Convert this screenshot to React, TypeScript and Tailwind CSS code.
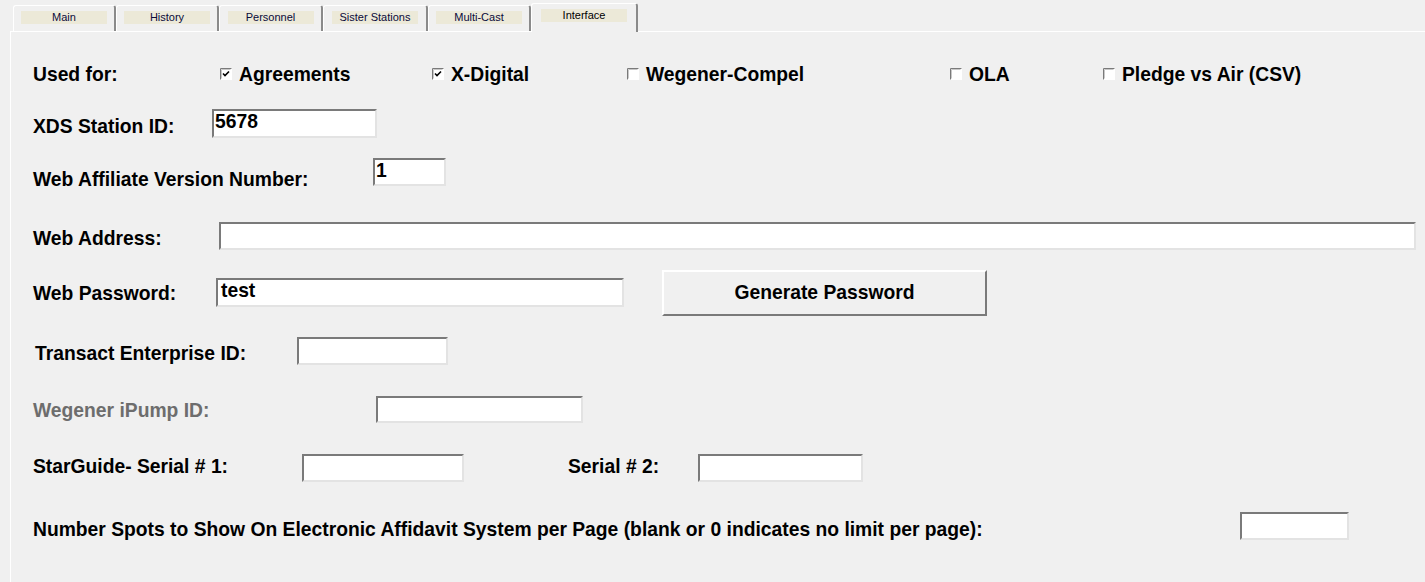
import React from "react";

const tabs = [
  { label: "Main", w: "w-[103px]" },
  { label: "History", w: "w-[103px]" },
  { label: "Personnel", w: "w-[104px]" },
  { label: "Sister Stations", w: "w-[105px]" },
  { label: "Multi-Cast", w: "w-[103px]" },
];

function Tab({ label, w }: { label: string; w: string }) {
  return (
    <div
      className={`${w} h-[27px] mt-[5px] border-t border-l border-t-white border-l-white border-r-2 border-r-[#8a8a8a] rounded-t-[3px] flex justify-center pt-[5px]`}
    >
      <div className="w-[86px] h-[13px] bg-[#ece9d8] flex items-center justify-center text-[11px] text-[#0a0a3a] leading-none">
        {label}
      </div>
    </div>
  );
}

function Check({ checked }: { checked?: boolean }) {
  return (
    <svg width="12" height="12" viewBox="0 0 12 12" className="shrink-0">
      <rect x="0" y="0" width="12" height="12" fill="#ffffff" />
      <path d="M0.5 11.5 V0.5 H11.5" fill="none" stroke="#7a7a7a" />
      <path d="M1.5 10.5 V1.5 H10.5" fill="none" stroke="#c8c8c8" />
      {checked && <path d="M3 5.5 L5 7.5 L9 3.5" fill="none" stroke="#000" strokeWidth="1.6" />}
    </svg>
  );
}

function Field({ className, value }: { className: string; value?: string }) {
  return (
    <div
      className={`${className} bg-white border-2 border-t-[#7a7a7a] border-l-[#7a7a7a] border-b-[#e3e3e3] border-r-[#e3e3e3] pl-[1px] text-[19.3px] font-bold leading-[22px] text-black`}
    >
      {value}
    </div>
  );
}

const label = "text-[19.3px] font-bold leading-none whitespace-nowrap pt-[2px]";

export default function App() {
  return (
    <div className="w-[1425px] h-[582px] bg-[#f0f0f0] overflow-hidden flex flex-col text-black font-['Liberation_Sans',Arial,sans-serif]">
      <div className="flex h-[31px] pl-[13px] shrink-0">
        {tabs.map((t) => (
          <Tab key={t.label} {...t} />
        ))}
        <div className="w-[107px] h-[29px] mt-[3px] border-t border-l border-t-white border-l-white border-r-2 border-r-[#8a8a8a] rounded-t-[3px] flex justify-center pt-[5px] relative z-10 bg-[#f0f0f0] -mb-[1px]">
          <div className="w-[86px] h-[13px] bg-[#ece9d8] flex items-center justify-center text-[11px] text-black leading-none">
            Interface
          </div>
        </div>
      </div>

      <div className="ml-[10px] flex-1 border-t border-l border-white pl-[22px] pt-[28px] flex flex-col">
        <div className="flex items-center h-[28px]">
          <div className={`${label} w-[187px]`}>Used for:</div>
          <div className="flex items-center gap-[7px] w-[212px]">
            <Check checked />
            <span className={label}>Agreements</span>
          </div>
          <div className="flex items-center gap-[7px] w-[195px]">
            <Check checked />
            <span className={label}>X-Digital</span>
          </div>
          <div className="flex items-center gap-[7px] w-[323px]">
            <Check />
            <span className={label}>Wegener-Compel</span>
          </div>
          <div className="flex items-center gap-[7px] w-[153px]">
            <Check />
            <span className={label}>OLA</span>
          </div>
          <div className="flex items-center gap-[7px]">
            <Check />
            <span className={label}>Pledge vs Air (CSV)</span>
          </div>
        </div>

        <div className="flex items-center h-[29px] mt-[21px]">
          <div className={`${label} w-[179px] mt-[5px]`}>XDS Station ID:</div>
          <Field className="w-[165px] h-[29px]" value="5678" />
        </div>

        <div className="flex items-center h-[28px] mt-[20px]">
          <div className={`${label} w-[340px] mt-[14px]`}>Web Affiliate Version Number:</div>
          <Field className="w-[73px] h-[28px]" value="1" />
        </div>

        <div className="flex items-center h-[28px] mt-[36px]">
          <div className={`${label} w-[186px] mt-[4px]`}>Web Address:</div>
          <Field className="w-[1197px] h-[28px]" />
        </div>

        <div className="flex items-center h-[45px] mt-[20px]">
          <div className={`${label} w-[183px]`}>Web Password:</div>
          <Field className="w-[408px] h-[29px] pl-[3px]" value="test" />
          <button className="ml-[38px] w-[325px] h-[46px] bg-[#f0f0f0] border-2 border-t-white border-l-white border-b-[#7a7a7a] border-r-[#7a7a7a] text-[19.3px] font-bold text-black pt-[2px]">
            Generate Password
          </button>
        </div>

        <div className="flex items-center h-[28px] mt-[22px]">
          <div className={`${label} w-[262px] ml-[2px] mt-[4px]`}>Transact Enterprise ID:</div>
          <Field className="w-[151px] h-[28px]" />
        </div>

        <div className="flex items-center h-[27px] mt-[31px]">
          <div className={`${label} w-[343px] text-[#6d6d6d]`}>Wegener iPump ID:</div>
          <Field className="w-[207px] h-[27px]" />
        </div>

        <div className="flex items-center h-[28px] mt-[31px]">
          <div className={`${label} w-[269px] -mt-[4px]`}>StarGuide- Serial # 1:</div>
          <Field className="w-[162px] h-[28px]" />
          <div className={`${label} w-[130px] ml-[104px] -mt-[4px]`}>Serial # 2:</div>
          <Field className="w-[165px] h-[28px]" />
        </div>

        <div className="flex items-center h-[28px] mt-[30px]">
          <div className={`${label} w-[1207px] mt-[6px]`}>
            Number Spots to Show On Electronic Affidavit System per Page (blank or 0 indicates no limit per page):
          </div>
          <Field className="w-[109px] h-[28px]" />
        </div>
      </div>
    </div>
  );
}
